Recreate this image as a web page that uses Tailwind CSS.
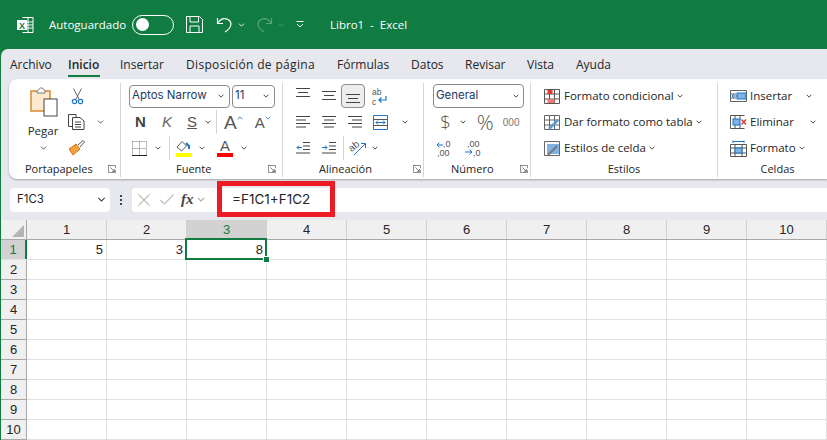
<!DOCTYPE html>
<html lang="es">
<head>
<meta charset="UTF-8">
<title>Libro1 - Excel</title>
<script src="https://cdn.jsdelivr.net/npm/@tailwindcss/browser@4"></script>
</head>
<body class="w-[827px] h-[440px] overflow-hidden bg-[#107c41] font-['Open_Sans',sans-serif] text-[11.500px] text-[#252525]">
<svg class="hidden"><symbol id="chev" viewBox="0 0 8 5"><path d="M.8.8 4 4 7.2.8" fill="none" stroke="currentColor" stroke-width="1.1"/></symbol>
<symbol id="launch" viewBox="0 0 10 10"><path d="M3.5.5H.5V9.5H9.5V6.5M.5.5H9.5V4M3 3 8 8M8 5V8H5" fill="none" stroke="#666" stroke-width="1"/></symbol></svg>

<!-- Title bar -->
<header class="h-[49px] flex items-center text-white">
  <div class="w-[49px] pl-[17px]">
    <svg class="w-[17px] h-[18px]" viewBox="0 0 17 18"><path d="M5.5 1.5H16V16.500H5.500M5.500 6H16M5.500 9H16M5.500 12H16M11 1.500V16.500" fill="none" stroke="#fff"/><rect x="0" y="4" width="10" height="10" fill="#fff"/><text x="5" y="12.500" text-anchor="middle" font-size="9" font-weight="700" fill="#107c41" font-family="Liberation Sans">X</text></svg>
  </div>
  <span class="w-[83px] text-[11.500px]">Autoguardado</span>
  <div class="w-[42px] h-[20px] rounded-full border border-white flex items-center pl-[3px]"><div class="w-[13px] h-[13px] rounded-full bg-white"></div></div>
  <svg class="ml-[12px] w-[17px] h-[17px]" viewBox="0 0 17 17"><path d="M.5.500H13.500L16.500 3.500V16.500H.5ZM4 .5V6H12.500V.5M4 16.500V10H13V16.500" fill="none" stroke="#fff"/></svg>
  <svg class="ml-[13px] w-[17px] h-[16px]" viewBox="0 0 17 16"><path d="M1.500 1V6.500H7M1.500 6.500C4 2.500 8 .500 12 2.500C16.500 5 16 10.500 9 15" fill="none" stroke="#fff" stroke-width="1.200"/></svg>
  <svg class="ml-[5px] w-[7px] h-[4px] text-white"><use href="#chev"/></svg>
  <svg class="ml-[11px] w-[17px] h-[16px]" viewBox="0 0 17 16"><path d="M15.500 1V6.500H10M15.500 6.500C13 2.500 9 .500 5 2.500C.5 5 1 10.500 8 15" fill="none" stroke="#5ca37e" stroke-width="1.200"/></svg>
  <svg class="ml-[5px] w-[7px] h-[4px] text-[#5ca37e]"><use href="#chev"/></svg>
  <svg class="ml-[11px] w-[8px] h-[7px]" viewBox="0 0 8 7"><path d="M.5.5H7.500M1 3 4 6 7 3" fill="none" stroke="#fff"/></svg>
  <span class="ml-[26px] text-[11.500px] whitespace-pre">Libro1  -  Excel</span>
</header>

<div class="ml-px h-[391px] bg-[#e6e8ee] rounded-tl-[7px] flex flex-col">
  <!-- Tabs -->
  <nav class="h-[30px] flex items-center pl-[9px] pt-[1px] text-[12px] relative">
    <span class="w-[58px]">Archivo</span>
    <span class="w-[52px] font-semibold relative">Inicio<i class="absolute left-0 top-[19px] w-[32px] h-[2px] bg-[#107c41]"></i></span>
    <span class="w-[66px]">Insertar</span>
    <span class="w-[151px] tracking-[.33px]">Disposición de página</span>
    <span class="w-[74px]">Fórmulas</span>
    <span class="w-[54px]">Datos</span>
    <span class="w-[62px]">Revisar</span>
    <span class="w-[49px]">Vista</span>
    <span>Ayuda</span>
  </nav>

  <!-- Ribbon -->
  <section class="ml-[8px] h-[100px] bg-white rounded-l-[8px] shadow-[0_1px_2px_rgba(0,0,0,.3)] flex pt-[4px] pb-[2px]">

    <!-- Portapapeles -->
    <div class="w-[112px] border-r border-[#d6d6d6] flex flex-col">
      <div class="flex-1 flex">
        <div class="w-[59px] pl-[5px] flex flex-col items-center">
          <svg class="mt-[4px] ml-[6px] w-[28px] h-[31px]" viewBox="0 0 28 31"><path d="M1 4H20V24H1Z" fill="#fde9cf" stroke="#d98a2b" stroke-width="1.500"/><path d="M7 4 10.500 1H12.500L15 4V6H7Z" fill="#fff" stroke="#777"/><rect x="14" y="12" width="13" height="17" fill="#fff" stroke="#444"/></svg>
          <span class="mt-[4px] ml-[4px]">Pegar</span>
          <svg class="mt-[7px] ml-[4px] w-[7px] h-[4px] text-[#444]"><use href="#chev"/></svg>
        </div>
        <div class="flex flex-col">
          <div class="h-[26px] flex items-center pl-[3px]"><svg class="w-[13px] h-[17px]" viewBox="0 0 13 17"><path d="M2.500 .5 8 11M10.500 .5 5 11" fill="none" stroke="#666"/><circle cx="3.500" cy="13.500" r="2.200" fill="none" stroke="#1b74c5" stroke-width="1.200"/><circle cx="9.500" cy="13.500" r="2.200" fill="none" stroke="#1b74c5" stroke-width="1.200"/></svg></div>
          <div class="h-[26px] flex items-center"><svg class="w-[17px] h-[16px]" viewBox="0 0 17 16"><path d="M4 12.500H.5V.5H8V3M4.500 3.500H12L16 7V15.500H4.500ZM7 8H13M7 10.500H13M7 13H13" fill="none" stroke="#444"/></svg><svg class="ml-[12px] w-[7px] h-[4px] text-[#444]"><use href="#chev"/></svg></div>
          <div class="h-[26px] flex items-center"><svg class="w-[17px] h-[16px]" viewBox="0 0 17 16"><path d="M1 9 8 4 12 9 5 15Z" fill="#f6a13c" stroke="#d9731a"/><path d="M10 5 15 .5 16.500 2 12 7" fill="#fff" stroke="#555"/></svg></div>
        </div>
      </div>
      <div class="h-[19px] flex items-center justify-between pl-[16px] pr-[4px] text-[11px] mb-[1px]"><span>Portapapeles</span><svg class="w-[8px] h-[8px]"><use href="#launch"/></svg></div>
    </div>

    <!-- Fuente -->
    <div class="w-[162px] border-r border-[#d6d6d6] flex flex-col">
      <div class="flex-1 pl-[8px]">
        <div class="h-[26px] flex items-center gap-[2px]">
          <div class="w-[101px] h-[23px] border border-[#8c8c8c] rounded-[4px] flex items-center justify-between pl-[2px] pr-[5px]"><span class="font-['Inter',sans-serif] text-[11.500px] text-[#1c3a66]">Aptos Narrow</span><svg class="w-[6px] h-[4px]"><use href="#chev"/></svg></div>
          <div class="w-[43px] h-[23px] border border-[#8c8c8c] rounded-[4px] flex items-center justify-between pl-[2px] pr-[5px]"><span class="font-['Inter',sans-serif] text-[11.500px] text-[#1c3a66]">11</span><svg class="w-[6px] h-[4px]"><use href="#chev"/></svg></div>
        </div>
        <div class="h-[26px] flex items-center">
          <b class="w-[26px] pl-[6px] text-[15px] font-['Liberation_Sans',sans-serif] text-[#444]">N</b>
          <i class="w-[26px] pl-[7px] text-[15px] font-['Liberation_Sans',sans-serif] text-[#666]">K</i>
          <span class="w-[18px] pl-[6px] text-[15px] font-['Liberation_Sans',sans-serif] underline text-[#555]">S</span>
          <svg class="ml-[6px] w-[6px] h-[4px]"><use href="#chev"/></svg>
          <div class="ml-[5px] w-px h-[24px] bg-[#d6d6d6]"></div>
          <span class="ml-[7px] text-[19px] leading-none text-[#555] font-['Liberation_Sans',sans-serif]">A</span><svg class="w-[6px] h-[4px] mb-[8px] text-[#1b74c5]" viewBox="0 0 8 5"><path d="M.8 4.200 4 1 7.200 4.200" fill="none" stroke="currentColor" stroke-width="1.200"/></svg>
          <span class="ml-[12px] text-[15px] leading-none text-[#555] font-['Liberation_Sans',sans-serif]">A</span><svg class="w-[6px] h-[4px] mb-[8px] text-[#1b74c5]"><use href="#chev"/></svg>
        </div>
        <div class="h-[26px] flex items-center">
          <svg class="ml-[3px] w-[15px] h-[15px]" viewBox="0 0 15 15"><path d="M.5.500H14.500M.5 7.500H14.500M.5.500V14.500M7.500.5V14.500M14.500.5V14.500" fill="none" stroke="#777" stroke-dasharray="1 1"/><path d="M0 14.500H15" stroke="#222"/></svg>
          <svg class="ml-[8px] w-[6px] h-[4px]"><use href="#chev"/></svg>
          <div class="ml-[8px] w-px h-[24px] bg-[#d6d6d6]"></div>
          <svg class="ml-[6px] w-[16px] h-[17px]" viewBox="0 0 16 17"><path d="M1 7 6 1.500 10.500 6 5.500 11Z" fill="#fff" stroke="#555"/><path d="M10 3 13 6V9" fill="none" stroke="#1b74c5" stroke-width="2"/><rect y="13" width="16" height="4" fill="#ffff00"/></svg>
          <svg class="ml-[7px] w-[6px] h-[4px]"><use href="#chev"/></svg>
          <div class="ml-[12px] w-[16px] h-[18px] flex flex-col items-center"><span class="h-[14px] text-[15px] leading-[14px] text-[#555] font-['Liberation_Sans',sans-serif]">A</span><i class="w-[16px] h-[4px] bg-[#ff0000]"></i></div>
          <svg class="ml-[8px] w-[6px] h-[4px]"><use href="#chev"/></svg>
        </div>
      </div>
      <div class="h-[19px] flex items-center justify-between pl-[55px] pr-[6px] text-[11px] mb-[1px]"><span>Fuente</span><svg class="w-[8px] h-[8px]"><use href="#launch"/></svg></div>
    </div>

    <!-- Alineación -->
    <div class="w-[141px] border-r border-[#d6d6d6] flex flex-col">
      <div class="flex-1 pl-[13px]">
        <div class="h-[26px] flex items-center">
          <svg class="w-[14px] h-[12px] mb-[4px]" viewBox="0 0 14 12"><path d="M0 .5H14M2 4.500H12M0 8.500H14" stroke="#444"/></svg>
          <svg class="ml-[12px] w-[14px] h-[12px]" viewBox="0 0 14 12"><path d="M0 1.500H14M2 5.500H12M0 9.500H14" stroke="#444"/></svg>
          <div class="ml-[5px] w-[24px] h-[24px] rounded-[4px] border border-[#8c8c8c] bg-[#ededed] flex items-end justify-center pb-[3px]"><svg class="w-[14px] h-[12px]" viewBox="0 0 14 12"><path d="M0 2.500H14M2 6.500H12M0 10.500H14" stroke="#444"/></svg></div>
          <svg class="ml-[7px] w-[15px] h-[16px] overflow-visible" viewBox="0 0 15 16"><text font-size="8.500" fill="#555" font-family="Liberation Sans"><tspan x="0" y="6.500">ab</tspan><tspan x="0" y="16.500">c</tspan></text><path d="M14 8V12H7M9.500 9.500 7 12 9.500 14.500" fill="none" stroke="#1b74c5" stroke-width="1.200"/></svg>
        </div>
        <div class="h-[26px] flex items-center">
          <svg class="w-[14px] h-[12px]" viewBox="0 0 14 12"><path d="M0 .5H14M0 4H10M0 7.500H14M0 11H10" stroke="#444"/></svg>
          <svg class="ml-[12px] w-[14px] h-[12px]" viewBox="0 0 14 12"><path d="M0 .5H14M2 4H12M0 7.500H14M2 11H12" stroke="#444"/></svg>
          <svg class="ml-[12px] w-[14px] h-[12px]" viewBox="0 0 14 12"><path d="M0 .5H14M4 4H14M0 7.500H14M4 11H14" stroke="#444"/></svg>
          <svg class="ml-[11px] w-[15px] h-[15px]" viewBox="0 0 15 15"><path d="M.5.5H14.500V14.500H.5Z" fill="none" stroke="#1b74c5"/><path d="M.5 4.500H14.500M.5 10.500H14.500" fill="none" stroke="#555"/><path d="M3 7.500H12M5 5.500 3 7.500 5 9.500M10 5.500 12 7.500 10 9.500" fill="none" stroke="#1b74c5"/></svg>
          <svg class="ml-[14px] w-[6px] h-[4px]"><use href="#chev"/></svg>
        </div>
        <div class="h-[26px] flex items-center">
          <svg class="w-[14px] h-[12px]" viewBox="0 0 14 12"><path d="M7 .5H14M7 4H14M7 7.500H14M0 11H14" stroke="#444"/><path d="M6 5.500H1M3 3.500 1 5.500 3 7.500" fill="none" stroke="#1b74c5"/></svg>
          <svg class="ml-[12px] w-[14px] h-[12px]" viewBox="0 0 14 12"><path d="M7 .5H14M7 4H14M7 7.500H14M0 11H14" stroke="#444"/><path d="M0 5.500H5M3 3.500 5 5.500 3 7.500" fill="none" stroke="#1b74c5"/></svg>
          <div class="ml-[7px] w-px h-[24px] bg-[#d6d6d6]"></div>
          <svg class="ml-[6px] w-[17px] h-[15px] overflow-visible" viewBox="0 0 17 15"><text x="0" y="9" font-size="10" fill="#555" font-family="Liberation Sans" transform="rotate(-38 4 8)">ab</text><path d="M4 14 15 3M11 2.500H15.500V7" fill="none" stroke="#1b74c5"/></svg>
          <svg class="ml-[5px] w-[6px] h-[4px]"><use href="#chev"/></svg>
        </div>
      </div>
      <div class="h-[19px] flex items-center justify-between pl-[36px] pr-[2px] text-[11px] mb-[1px]"><span>Alineación</span><svg class="w-[8px] h-[8px]"><use href="#launch"/></svg></div>
    </div>

    <!-- Número -->
    <div class="w-[107px] border-r border-[#d6d6d6] flex flex-col">
      <div class="flex-1 pl-[9px]">
        <div class="h-[26px] flex items-center"><div class="w-[91px] h-[24px] border border-[#8c8c8c] rounded-[4px] flex items-center justify-between pl-[2px] pr-[4px]"><span class="font-['Inter',sans-serif] text-[11.500px] text-[#1c3a66]">General</span><svg class="w-[6px] h-[4px]"><use href="#chev"/></svg></div></div>
        <div class="h-[26px] flex items-center">
          <span class="ml-[7px] text-[19px] leading-none font-light text-[#555] font-['Open_Sans',sans-serif]">$</span>
          <svg class="ml-[9px] w-[6px] h-[4px]"><use href="#chev"/></svg>
          <span class="ml-[11px] text-[21px] leading-none font-light text-[#555] font-['Open_Sans',sans-serif]">%</span>
          <span class="ml-[9px] text-[10px] text-[#777] font-['Liberation_Sans',sans-serif]">000</span>
        </div>
        <div class="h-[26px] flex items-center">
          <svg class="ml-[3px] w-[16px] h-[16px] overflow-visible" viewBox="0 0 16 16"><text font-size="9" fill="#555" font-family="Liberation Sans"><tspan x="7" y="7">,0</tspan><tspan x="1" y="15.500">,00</tspan></text><path d="M7 5H1M3.500 2.500 1 5 3.500 7.500" fill="none" stroke="#1b74c5"/></svg>
          <svg class="ml-[12px] w-[16px] h-[16px] overflow-visible" viewBox="0 0 16 16"><text font-size="9" fill="#555" font-family="Liberation Sans"><tspan x="3" y="7">,00</tspan><tspan x="9" y="15.500">,0</tspan></text><path d="M1 12H8M5.500 9.500 8 12 5.500 14.500" fill="none" stroke="#1b74c5"/></svg>
        </div>
      </div>
      <div class="h-[19px] flex items-center justify-between pl-[27px] pr-[2px] text-[11px] mb-[1px]"><span>Número</span><svg class="w-[8px] h-[8px]"><use href="#launch"/></svg></div>
    </div>

    <!-- Estilos -->
    <div class="w-[187px] border-r border-[#d6d6d6] flex flex-col">
      <div class="flex-1 pl-[13px]">
        <div class="h-[26px] flex items-center">
          <svg class="w-[16px] h-[15px]" viewBox="0 0 16 15"><path d="M.5.5H15.500V14.500H.5ZM5.500.5V14.500M10.500.5V14.500M.5 5H15.500M.5 10H15.500" fill="none" stroke="#555"/><rect x="3.500" y="1" width="5" height="4" fill="#ee3333"/><rect x="3.500" y="10" width="7" height="4" fill="#f47a7a"/></svg>
          <span class="ml-[4px]">Formato condicional</span><svg class="ml-[3px] w-[6px] h-[4px]"><use href="#chev"/></svg>
        </div>
        <div class="h-[26px] flex items-center">
          <svg class="w-[16px] h-[15px]" viewBox="0 0 16 15"><path d="M.5.5H15.500V14.500H.5ZM5.500.5V14.500M10.500.5V14.500M.5 5H15.500M.5 10H15.500" fill="none" stroke="#666"/><path d="M5 14 14 5" stroke="#5b9bd5" stroke-width="2.500"/></svg>
          <span class="ml-[4px]">Dar formato como tabla</span><svg class="ml-[3px] w-[6px] h-[4px]"><use href="#chev"/></svg>
        </div>
        <div class="h-[26px] flex items-center">
          <svg class="w-[16px] h-[15px]" viewBox="0 0 16 15"><path d="M.5.5H15.500V14.500H.5Z" fill="none" stroke="#666"/><rect x="3" y="3" width="12" height="10" fill="#7fb3e6"/><path d="M4 14 13 5" stroke="#777" stroke-width="2"/></svg>
          <span class="ml-[4px]">Estilos de celda</span><svg class="ml-[3px] w-[6px] h-[4px]"><use href="#chev"/></svg>
        </div>
      </div>
      <div class="h-[19px] flex items-center justify-center text-[11px] mb-[1px]"><span>Estilos</span></div>
    </div>

    <!-- Celdas -->
    <div class="flex-1 flex flex-col">
      <div class="flex-1 pl-[12px]">
        <div class="h-[26px] flex items-center">
          <svg class="w-[17px] h-[14px]" viewBox="0 0 17 14"><path d="M.5 1.500H16.500V12.500H.5ZM.5 5H6M.5 9H6" fill="none" stroke="#666"/><rect x="7" y="4" width="9" height="6" fill="#7fb3e6" stroke="#1b74c5"/><path d="M8 7H2M4 5 2 7 4 9" fill="none" stroke="#1b74c5"/></svg>
          <span class="ml-[3px] w-[56px]">Insertar</span><svg class="w-[6px] h-[4px]"><use href="#chev"/></svg>
        </div>
        <div class="h-[26px] flex items-center">
          <svg class="w-[17px] h-[14px]" viewBox="0 0 17 14"><path d="M.5.5H14.500M.5 13.500H14.500M.5.5V13.500M5 .5V4M10 .5V4M5 10V13.500M10 10V13.500" fill="none" stroke="#555"/><rect x="3" y="4" width="7" height="6" fill="#7fb3e6" stroke="#1b74c5"/><path d="M11.500 4.500 16 9.500M16 4.500 11.500 9.500" stroke="#e03131" stroke-width="1.300"/></svg>
          <span class="ml-[3px] w-[60px]">Eliminar</span><svg class="w-[6px] h-[4px]"><use href="#chev"/></svg>
        </div>
        <div class="h-[26px] flex items-center">
          <svg class="w-[17px] h-[17px]" viewBox="0 0 17 17"><path d="M.5 4.500H16.500V16.500H.5ZM.5 8H16.500M.5 13H16.500M5 4.500V16.500M12 4.500V16.500" fill="none" stroke="#555"/><rect x="5" y="8" width="7" height="5" fill="#7fb3e6" stroke="#1b74c5"/><path d="M3 .5V3M14 .5V3M3 1.500H14" fill="none" stroke="#1b74c5"/></svg>
          <span class="ml-[3px]">Formato</span><svg class="ml-[3px] w-[6px] h-[4px]"><use href="#chev"/></svg>
        </div>
      </div>
      <div class="h-[19px] flex items-center justify-center text-[11px] mb-[1px]"><span class="ml-[10px]">Celdas</span></div>
    </div>
  </section>

  <!-- Formula bar -->
  <section class="h-[41px] flex items-center pl-[9px] relative">
    <div class="w-[100px] h-[24px] bg-white rounded-[4px] flex items-center justify-between pl-[7px] pr-[4px] font-['Inter',sans-serif] text-[11.500px]"><span>F1C3</span><svg class="w-[9px] h-[5px] text-[#444]"><use href="#chev"/></svg></div>
    <div class="w-[22px] flex flex-col items-center gap-[2px]"><i class="w-[2px] h-[2px] bg-[#444]"></i><i class="w-[2px] h-[2px] bg-[#444]"></i><i class="w-[2px] h-[2px] bg-[#444]"></i></div>
    <div class="w-[84px] h-[24px] bg-white rounded-l-[4px] flex items-center pl-[6px]">
      <svg class="w-[12px] h-[12px]" viewBox="0 0 12 12"><path d="M.5.5 11.500 11.500M11.500.5 .5 11.500" stroke="#bdbdbd" stroke-width="1.200"/></svg>
      <svg class="ml-[10px] w-[14px] h-[11px]" viewBox="0 0 14 11"><path d="M.5 6 4.500 10 13.500.5" fill="none" stroke="#bdbdbd" stroke-width="1.200"/></svg>
      <i class="ml-[7px] text-[15px] font-['Liberation_Serif',serif] font-bold leading-none text-[#444]">fx</i>
      <svg class="ml-[3px] w-[8px] h-[5px] text-[#aaa]"><use href="#chev"/></svg>
    </div>
    <div class="flex-1 h-[24px] bg-white flex items-center pl-[16px] font-['Inter',sans-serif] text-[13.500px]">=F1C1+F1C2</div>
    <!-- red annotation over the bar -->
    <div class="absolute left-[216px] top-[2px] w-[118px] h-[36px] border-[5px] border-[#ed1c24]"></div>
  </section>

  <!-- Sheet -->
  <section class="flex-1 bg-white overflow-hidden font-['Liberation_Sans',sans-serif] text-[13px] relative">
    <div id="sheet"></div>
    <div class="absolute left-[184px] top-[18px] w-[82px] h-[22px] border-2 border-[#107c41]"></div>
    <div class="absolute left-[262px] top-[36px] w-[5px] h-[5px] bg-[#107c41] border border-white box-content"></div>
  </section>
</div>

<script>
  var cols = [1,2,3,4,5,6,7,8,9,10];
  var html = '<div class="flex h-[20px] bg-[#f0f0f0] border-b border-[#a8a8a8]"><div class="w-[26px] shrink-0 border-r border-[#a8a8a8] relative overflow-hidden"><i class="absolute right-[2px] bottom-[2px] w-0 h-0 border-l-[12px] border-b-[12px] border-l-transparent border-b-[#b4b4b4]"></i></div>';
  cols.forEach(function (c) {
    html += c === 3
      ? '<div class="w-[80px] shrink-0 flex items-center justify-center bg-[#d2d2d2] text-[#107c41] border-r border-[#d2d2d2]">' + c + '</div>'
      : '<div class="w-[80px] shrink-0 flex items-center justify-center border-r border-[#d0d0d0]">' + c + '</div>';
  });
  html += '</div>';
  var vals = { 1: '5', 2: '3', 3: '8' };
  for (var r = 1; r <= 10; r++) {
    html += '<div class="flex h-[20px] border-b border-[#e0e0e0]">';
    html += r === 1
      ? '<div class="w-[26px] shrink-0 flex items-center justify-center bg-[#d2d2d2] text-[#107c41] border-r-2 border-[#107c41]">1</div>'
      : '<div class="w-[26px] shrink-0 flex items-center justify-center bg-[#f0f0f0] border-r border-[#a8a8a8] shadow-[0_1px_0_#a8a8a8]">' + r + '</div>';
    cols.forEach(function (c) {
      html += '<div class="w-[80px] shrink-0 flex items-center justify-end pr-[3px] border-r border-[#e0e0e0]">' + (r === 1 && vals[c] ? vals[c] : '') + '</div>';
    });
    html += '</div>';
  }
  document.getElementById('sheet').innerHTML = html;
</script>
</body>
</html>
